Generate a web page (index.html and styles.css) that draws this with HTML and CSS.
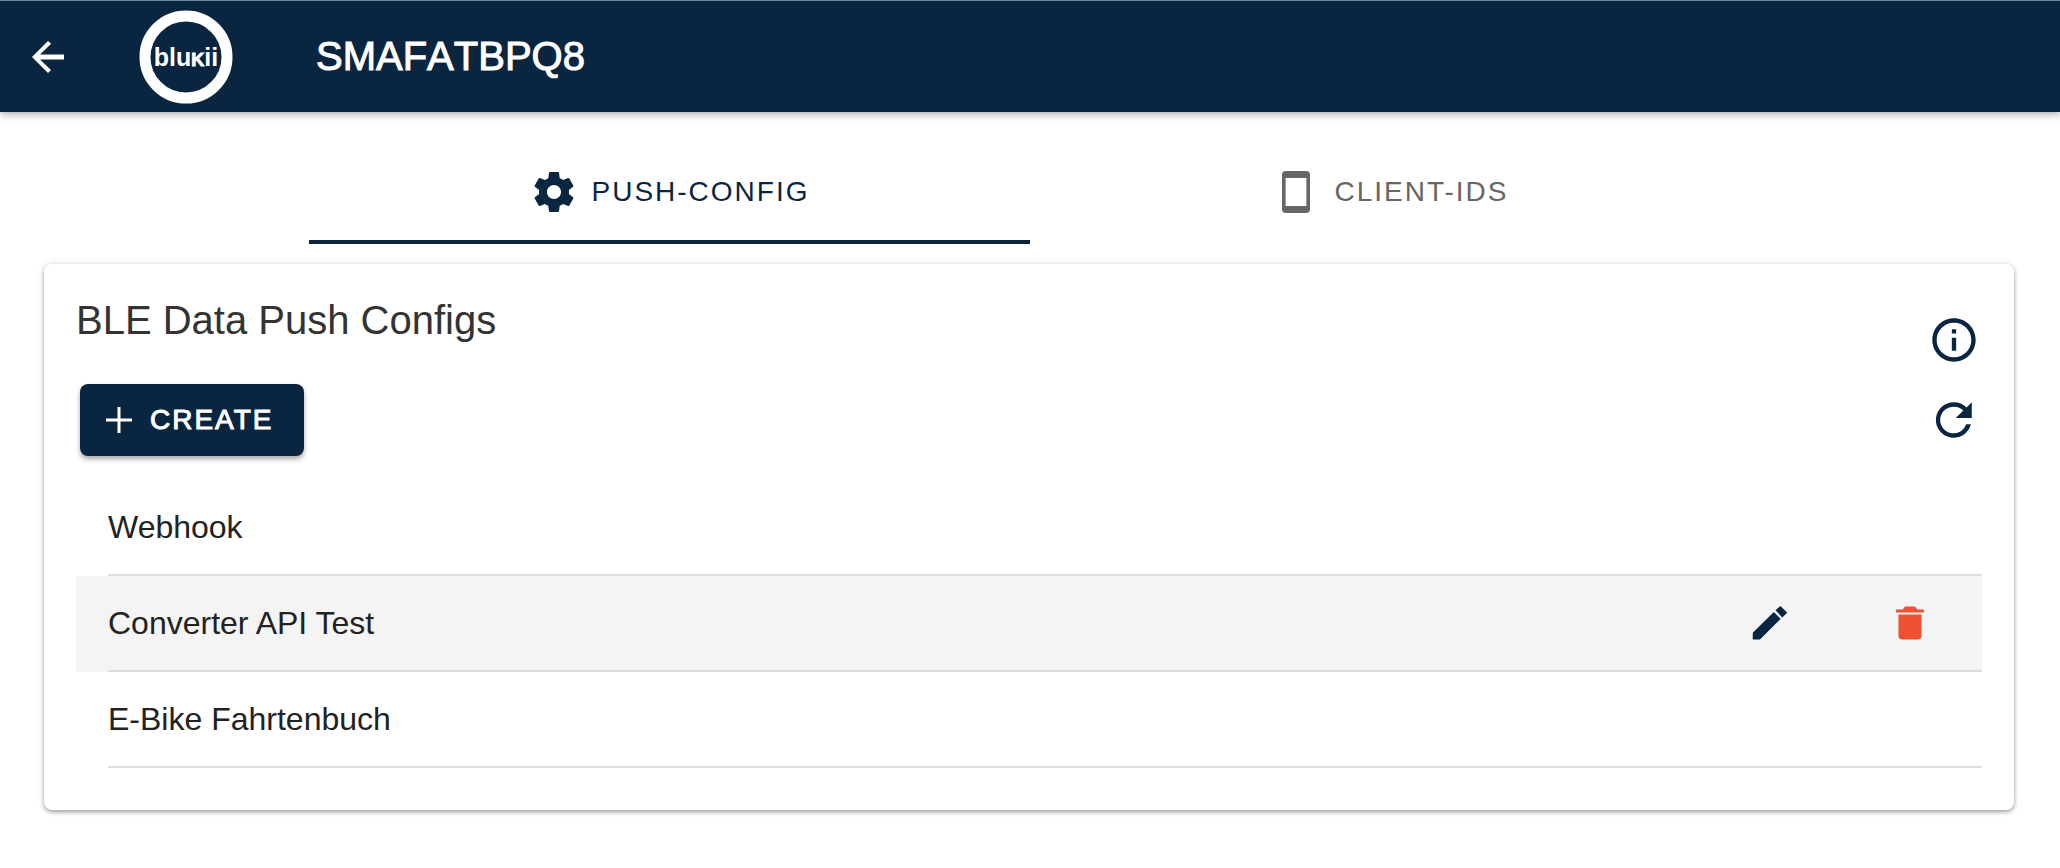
FILE: index.html
```html
<!DOCTYPE html>
<html lang="en">
<head>
<meta charset="utf-8">
<title>SMAFATBPQ8</title>
<link rel="stylesheet" href="styles.css">
</head>
<body>
<header class="app-bar">
  <button class="icon-button" type="button" aria-label="Back">
    <svg class="icon" viewBox="0 0 24 24"><path d="M20 10.800H8l5.600-5.400L12 4l-8 8 8 8 1.500-1.500L8 13.200H20z"/></svg>
  </button>
  <svg class="logo" viewBox="0 0 94 94" role="img" aria-label="blukii">
    <circle class="logo-ring" cx="47" cy="47" r="41"/>
    <text class="logo-text" x="47" y="56">blu<tspan class="logo-k">k</tspan>ii</text>
  </svg>
  <h1 class="app-title">SMAFATBPQ8</h1>
</header>

<nav class="tabs" role="tablist">
  <button class="tab tab-active" type="button" role="tab" aria-selected="true">
    <svg class="icon" viewBox="0 0 24 24"><path d="M19.430 12.980c.04-.32.07-.64.07-.98s-.03-.66-.07-.98l2.110-1.650c.19-.15.24-.42.12-.64l-2-3.460c-.12-.22-.39-.3-.61-.22l-2.490 1c-.52-.4-1.080-.73-1.690-.98l-.38-2.650A.488.488 0 0 0 14 2h-4c-.25 0-.46.18-.49.42l-.38 2.650c-.61.25-1.170.59-1.690.98l-2.490-1c-.23-.09-.49 0-.61.22l-2 3.460c-.13.22-.07.49.12.64l2.110 1.650c-.04.32-.07.65-.07.98s.03.66.07.98l-2.110 1.650c-.19.15-.24.42-.12.64l2 3.460c.12.22.39.3.61.22l2.490-1c.52.4 1.080.73 1.690.98l.38 2.650c.03.24.24.42.49.42h4c.25 0 .46-.18.49-.42l.38-2.650c.61-.25 1.170-.59 1.690-.98l2.490 1c.23.09.49 0 .61-.22l2-3.460c.12-.22.07-.49-.12-.64l-2.110-1.650zM12 15.500c-1.930 0-3.500-1.570-3.500-3.500s1.570-3.500 3.500-3.500 3.500 1.570 3.500 3.500-1.570 3.500-3.500 3.500z"/></svg>
    <span>PUSH-CONFIG</span>
  </button>
  <button class="tab" type="button" role="tab" aria-selected="false">
    <svg class="icon" viewBox="0 0 24 24"><path d="M17 1.500H7a2 2 0 0 0-2 2v17a2 2 0 0 0 2 2h10a2 2 0 0 0 2-2v-17a2 2 0 0 0-2-2zM17.200 19H6.800V5h10.400v14z"/></svg>
    <span>CLIENT-IDS</span>
  </button>
</nav>

<main class="card">
  <div class="card-head">
    <div class="card-intro">
      <h2 class="card-title">BLE Data Push Configs</h2>
      <button class="create" type="button">
        <svg class="plus" viewBox="0 0 26 26"><path d="M13 0v26M0 13h26"/></svg>
        <span>CREATE</span>
      </button>
    </div>
    <div class="card-tools">
      <button class="icon-button" type="button" aria-label="Info">
        <svg class="icon icon-large" viewBox="0 0 24 24"><path d="M11 7h2v2h-2zm0 4h2v6h-2zm1-9C6.480 2 2 6.480 2 12s4.480 10 10 10 10-4.480 10-10S17.520 2 12 2zm0 18c-4.410 0-8-3.590-8-8s3.590-8 8-8 8 3.590 8 8-3.590 8-8 8z"/></svg>
      </button>
      <button class="icon-button" type="button" aria-label="Refresh">
        <svg class="icon icon-large" viewBox="0 0 24 24"><path d="M17.800 6.200A8.200 8.200 0 0 0 12 3.800a8.200 8.200 0 1 0 7.800 10.200h-2.200A6.150 6.150 0 1 1 12 5.850c1.700 0 3.200.7 4.300 1.800L12.800 11.100h7.400V3.800z"/></svg>
      </button>
    </div>
  </div>

  <ul class="list">
    <li class="row"><div class="row-body">Webhook</div></li>
    <li class="row row-hover">
      <div class="row-body">
        <span>Converter API Test</span>
        <span class="row-actions">
          <button class="icon-button" type="button" aria-label="Edit">
            <svg class="icon icon-small" viewBox="0 0 24 24"><path d="M2.600 21v-3.700L14.100 6l3.700 3.700L6.500 21zM15 5.100l2.700-2.400 3.700 3.700-2.700 2.600z"/></svg>
          </button>
          <button class="icon-button danger" type="button" aria-label="Delete">
            <svg class="icon icon-small" viewBox="0 0 24 24"><path d="M5.700 7.300h12.600V19a2 2 0 0 1-2 2H7.700a2 2 0 0 1-2-2zM4.400 4.700h3.700L9.200 3h5.600l1.100 1.700h3.700v1.600H4.400z"/></svg>
          </button>
        </span>
      </div>
    </li>
    <li class="row"><div class="row-body">E-Bike Fahrtenbuch</div></li>
  </ul>
</main>
</body>
</html>
```

FILE: styles.css
```css
:root {
  --navy: #0a2540;
}

* {
  box-sizing: border-box;
}

body {
  display: flow-root;
  min-height: 100vh;
  margin: 0;
  background: #fff;
  color: #222;
  font-family: "Liberation Sans", Arial, sans-serif;
  font-size: 32px;
}

button {
  border: 0;
  padding: 0;
  background: none;
  color: inherit;
  font: inherit;
  cursor: pointer;
}

.icon {
  display: block;
  width: 48px;
  height: 48px;
  fill: currentColor;
}

.icon-large {
  width: 52px;
  height: 52px;
}

.icon-small {
  width: 44px;
  height: 44px;
}

.icon-button {
  color: var(--navy);
}

.app-bar {
  display: flex;
  align-items: center;
  height: 112px;
  padding: 0 24px;
  border-top: 1px solid #6f8596;
  background: var(--navy);
  color: #fff;
  box-shadow: 0 2px 8px rgba(0, 0, 0, 0.35);
}

.app-bar .icon-button {
  color: #fff;
}

.logo {
  width: 94px;
  height: 94px;
  margin: 0 83px 0 67px;
}

.logo-ring {
  fill: none;
  stroke: #fff;
  stroke-width: 11;
}

.logo-text {
  fill: #fff;
  font-size: 25px;
  font-weight: bold;
  text-anchor: middle;
}

.logo-k {
  font-variant: small-caps;
  stroke: #fff;
  stroke-width: 1;
}

.app-title {
  margin: 0;
  padding-bottom: 2px;
  font-size: 40px;
  font-weight: normal;
  font-kerning: none;
  line-height: 48px;
  -webkit-text-stroke: 1px currentColor;
}

.tabs {
  display: grid;
  grid-template-columns: 1fr 1fr;
  width: 70%;
  margin: 32px auto 0;
}

.tab {
  display: flex;
  align-items: center;
  justify-content: center;
  gap: 14px;
  height: 100px;
  border-bottom: 4px solid transparent;
  color: #666;
  font-size: 28px;
  letter-spacing: 2px;
}

.tab-active {
  border-bottom-color: var(--navy);
  color: var(--navy);
}

.card {
  margin: 20px 46px 0 44px;
  padding: 32px 32px 42px;
  border-radius: 8px;
  background: #fff;
  box-shadow: 0 2px 4px rgba(0, 0, 0, 0.35), 0 0 8px rgba(0, 0, 0, 0.08);
}

.card-head {
  display: flex;
  justify-content: space-between;
}

.card-title {
  margin: 0 0 40px;
  color: #333;
  font-size: 40px;
  font-weight: normal;
  line-height: 48px;
}

.create {
  display: flex;
  align-items: center;
  gap: 18px;
  height: 72px;
  margin-left: 4px;
  padding: 0 30px 0 26px;
  border-radius: 8px;
  background: var(--navy);
  color: #fff;
  font-size: 28px;
  letter-spacing: 2px;
  -webkit-text-stroke: 1px currentColor;
  box-shadow: 0 3px 5px rgba(0, 0, 0, 0.35);
}

.plus {
  width: 26px;
  height: 26px;
  stroke: #fff;
  stroke-width: 3;
}

.card-tools {
  display: flex;
  flex-direction: column;
  gap: 28px;
  padding: 18px 2px 0 0;
}

.list {
  margin: 24px 0 0;
  padding: 0;
  list-style: none;
}

.row {
  padding-left: 32px;
}

.row-hover {
  background: #f4f4f4;
}

.row-body {
  display: flex;
  align-items: center;
  justify-content: space-between;
  height: 96px;
  border-bottom: 2px solid #dcdcdc;
}

.row-actions {
  display: flex;
  gap: 96px;
  padding-right: 50px;
}

.danger {
  color: #ed512f;
}
```
